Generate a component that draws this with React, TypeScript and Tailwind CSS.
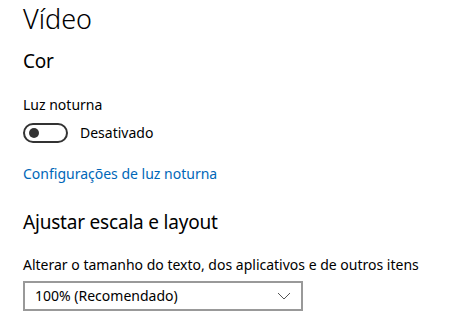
import React from 'react';

const App: React.FC = () => {
  return (
    <div className="w-[462px] h-[320px] overflow-hidden bg-white text-black pl-[23px] font-['Noto_Sans','Open_Sans',sans-serif]">
      <h1 className="text-[27px] font-light leading-[36px] mt-[1px]">Vídeo</h1>

      <h2 className="text-[19px] leading-[28px] mt-[10px] tracking-[-0.2px]">Cor</h2>

      <p className="text-[14px] leading-[20px] mt-[20px]">Luz noturna</p>

      <div className="flex items-center gap-[12px] mt-[8px]">
        <div className="w-[45px] h-[20px] rounded-full border-2 border-[#333] flex items-center pl-[4px]">
          <div className="w-[10px] h-[10px] rounded-full bg-[#333]" />
        </div>
        <span className="text-[14px] leading-[20px]">Desativado</span>
      </div>

      <a className="block text-[14px] leading-[20px] text-[#0067b8] mt-[21px]">Configurações de luz noturna</a>

      <h2 className="text-[19px] leading-[28px] mt-[24px] tracking-[-0.2px]">Ajustar escala e layout</h2>

      <p className="text-[14px] leading-[20px] mt-[19px]">Alterar o tamanho do texto, dos aplicativos e de outros itens</p>

      <div className="w-[280px] h-[30px] border-2 border-[#999] mt-[6px] flex items-center justify-between pl-[10px] pr-[10px]">
        <span className="text-[14px] leading-[20px]">100% (Recomendado)</span>
        <svg width="14" height="8" viewBox="0 0 14 8" fill="none">
          <path d="M1 1l6 6 6-6" stroke="#555" strokeWidth="1" />
        </svg>
      </div>
    </div>
  );
};

export default App;
